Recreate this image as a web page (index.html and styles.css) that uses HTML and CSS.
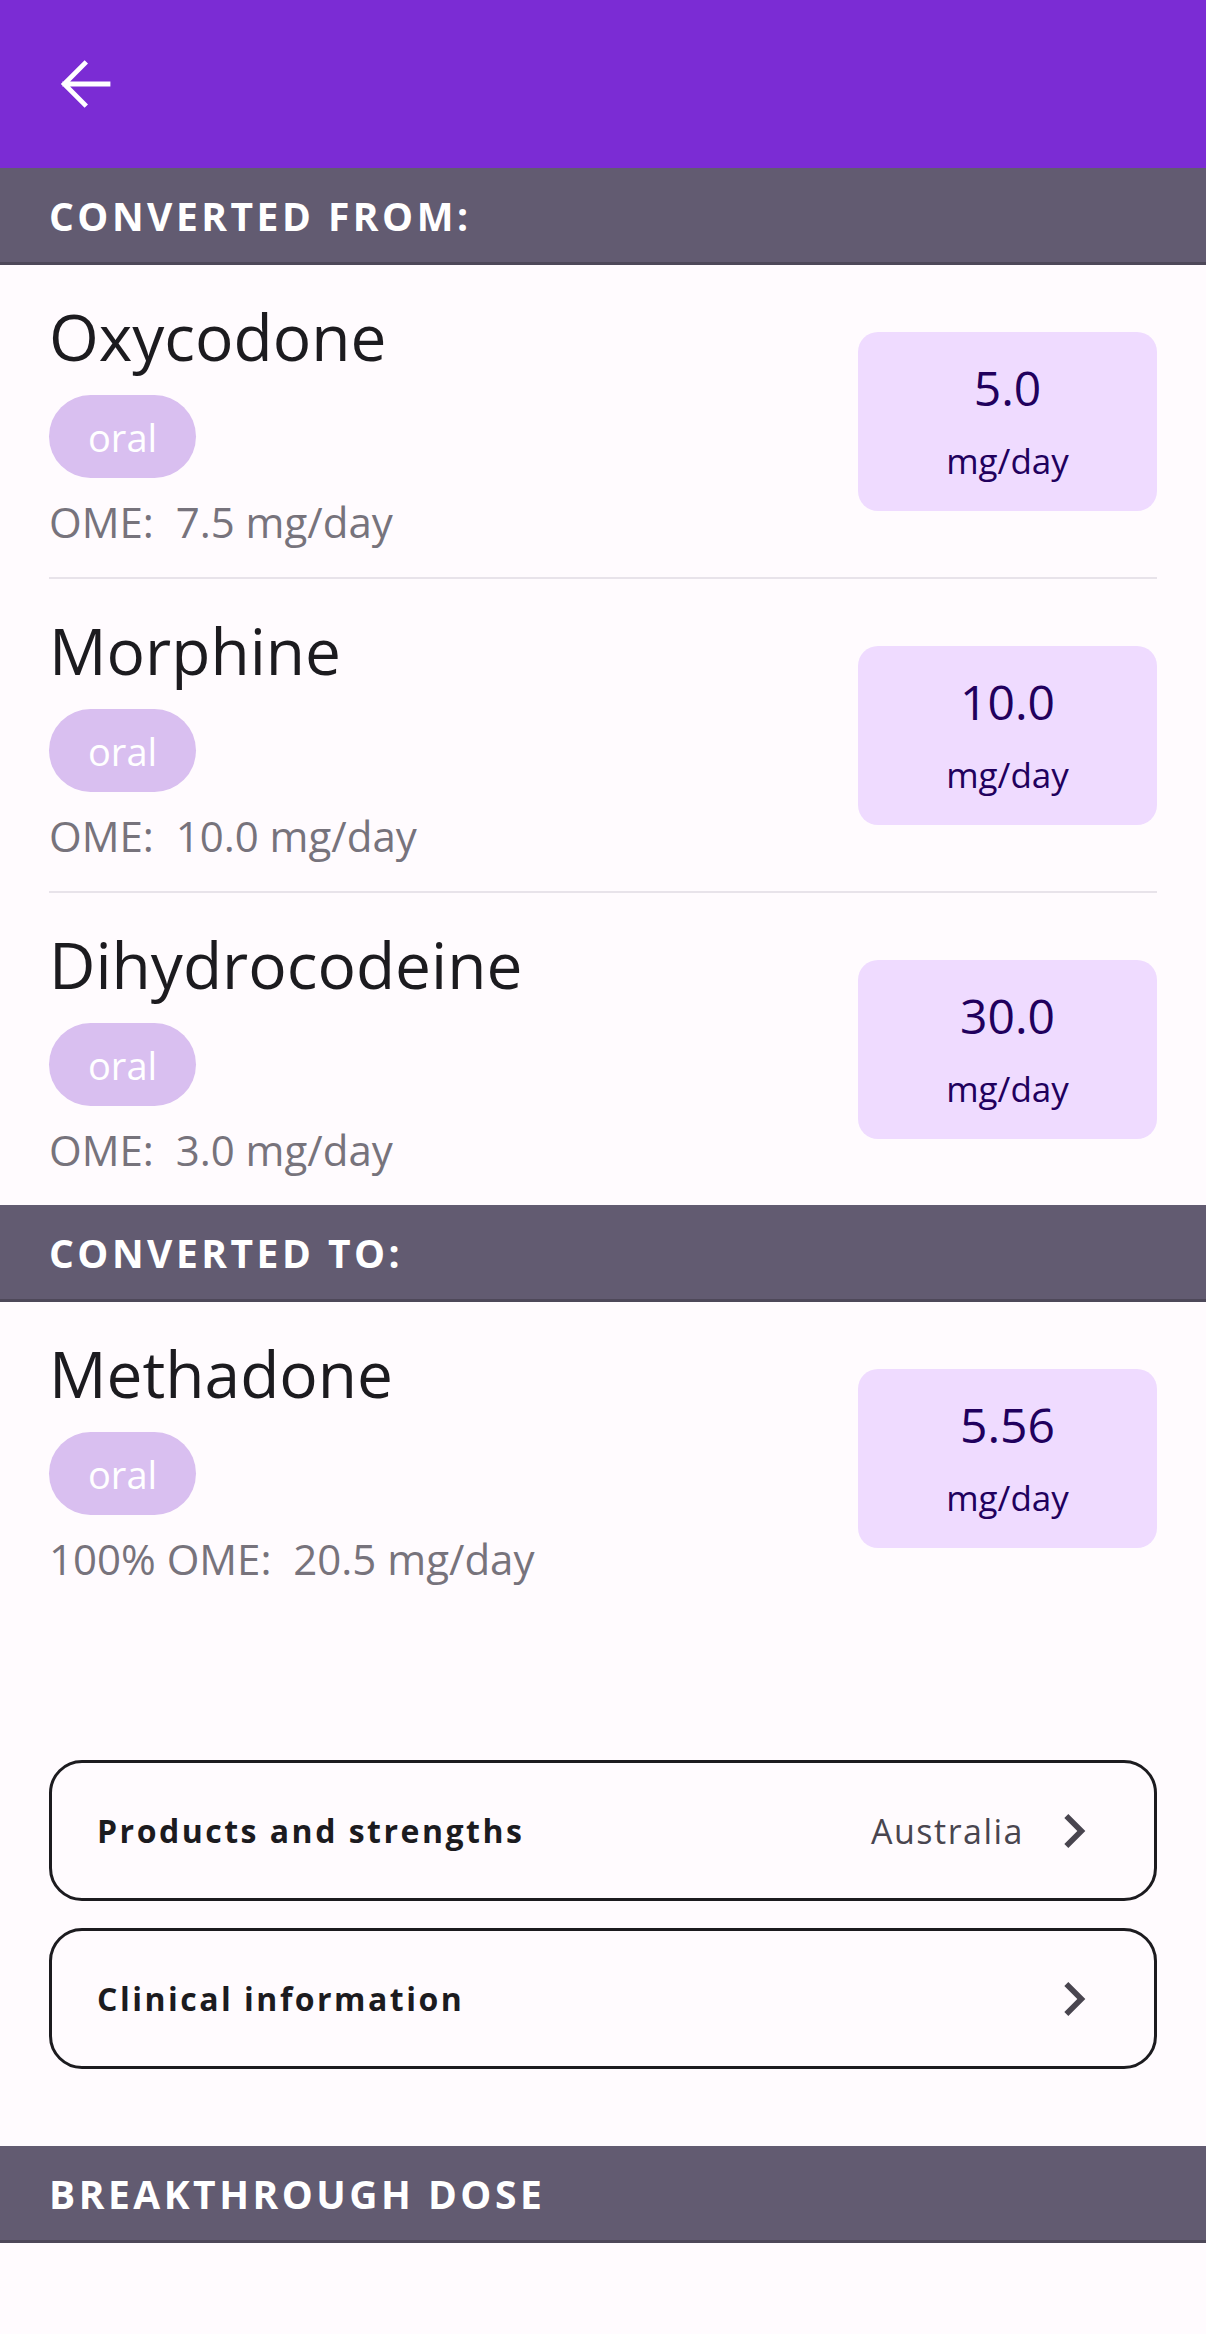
FILE: index.html
```html
<!DOCTYPE html>
<html lang="en">
<head>
<meta charset="utf-8">
<title>Conversion result</title>
<link rel="stylesheet" href="styles.css">
</head>
<body>
<header class="appbar">
  <button class="back" aria-label="Back">
    <svg viewBox="0 0 24 24" width="72" height="72"><path d="M20 12H5.6M12.2 5.2 5.4 12l6.8 6.8" fill="none" stroke="#fff" stroke-width="1.6" stroke-linecap="square"/></svg>
  </button>
</header>

<div class="band"><span>CONVERTED FROM:</span></div>
<section class="list">
  <div class="row">
    <div class="info">
      <div class="name">Oxycodone</div>
      <span class="chip">oral</span>
      <div class="ome">OME:&nbsp; 7.5 mg/day</div>
    </div>
    <div class="dose"><div class="num">5.0</div><div class="unit">mg/day</div></div>
  </div>
  <div class="row">
    <div class="info">
      <div class="name">Morphine</div>
      <span class="chip">oral</span>
      <div class="ome">OME:&nbsp; 10.0 mg/day</div>
    </div>
    <div class="dose"><div class="num">10.0</div><div class="unit">mg/day</div></div>
  </div>
  <div class="row">
    <div class="info">
      <div class="name">Dihydrocodeine</div>
      <span class="chip">oral</span>
      <div class="ome">OME:&nbsp; 3.0 mg/day</div>
    </div>
    <div class="dose"><div class="num">30.0</div><div class="unit">mg/day</div></div>
  </div>
</section>

<div class="band"><span>CONVERTED TO:</span></div>
<section class="list">
  <div class="row">
    <div class="info">
      <div class="name">Methadone</div>
      <span class="chip">oral</span>
      <div class="ome">100% OME:&nbsp; 20.5 mg/day</div>
    </div>
    <div class="dose"><div class="num">5.56</div><div class="unit">mg/day</div></div>
  </div>
</section>

<section class="links">
  <a class="card" href="#">
    <span class="card-title">Products and strengths</span>
    <span class="card-meta">Australia</span>
    <svg class="chev" viewBox="0 0 24 24" width="68" height="68"><path d="M10 6 8.59 7.41 13.17 12l-4.58 4.59L10 18l6-6z" fill="#49454F"/></svg>
  </a>
  <a class="card" href="#">
    <span class="card-title">Clinical information</span>
    <svg class="chev" viewBox="0 0 24 24" width="68" height="68"><path d="M10 6 8.59 7.41 13.17 12l-4.58 4.59L10 18l6-6z" fill="#49454F"/></svg>
  </a>
</section>

<div class="band"><span>BREAKTHROUGH DOSE</span></div>
</body>
</html>
```

FILE: styles.css
```css
* { box-sizing: border-box; }
html, body {
  margin: 0;
  padding: 0;
  background: #FFFBFE;
  font-family: "Open Sans", "Noto Sans", sans-serif;
  color: #1C1B1F;
}

.appbar {
  height: 168px;
  background: #7B2CD4;
  display: flex;
  align-items: center;
  padding-left: 48px;
}
.back {
  border: 0;
  background: transparent;
  padding: 0;
  width: 72px;
  height: 72px;
  display: block;
}
.back svg { display: block; }

.band {
  height: 97px;
  background: #625B71;
  border-bottom: 3px solid #4E4859;
  display: flex;
  align-items: center;
  padding-left: 49px;
}
.band span {
  color: #fff;
  font-weight: 700;
  font-size: 39px;
  letter-spacing: 3.5px;
}

.list { padding: 0 49px; }
.row {
  display: flex;
  align-items: center;
  justify-content: space-between;
  border-bottom: 2px solid #E8E3EA;
}
.row:last-child { border-bottom: 0; }

.info {
  display: flex;
  flex-direction: column;
  align-items: flex-start;
  padding: 32px 0 27px;
}
.name {
  font-size: 64px;
  line-height: 80px;
  color: #1C1B1F;
}
.chip {
  margin-top: 18px;
  height: 83px;
  padding: 0 39px;
  border-radius: 42px;
  background: #D9BFF0;
  color: #fff;
  font-size: 38px;
  display: inline-flex;
  align-items: center;
}
.ome {
  margin-top: 16px;
  font-size: 42px;
  line-height: 56px;
  color: #77737C;
}

.dose {
  width: 299px;
  height: 179px;
  border-radius: 20px;
  background: #EFDBFF;
  color: #21005D;
  display: flex;
  flex-direction: column;
  align-items: center;
  justify-content: center;
  gap: 19px;
}
.num { font-size: 48px; line-height: 60px; }
.unit { font-size: 35px; line-height: 48px; }

.links {
  padding: 146px 49px 77px;
  display: flex;
  flex-direction: column;
  gap: 27px;
}
.card {
  height: 141px;
  border: 3px solid #1C1B1F;
  border-radius: 33px;
  display: flex;
  align-items: center;
  padding: 0 46px 0 45px;
  text-decoration: none;
  color: #1C1B1F;
}
.card-title {
  font-size: 32px;
  font-weight: 700;
  letter-spacing: 2.5px;
  flex: 1;
}
.card-meta {
  font-size: 34px;
  letter-spacing: 1.5px;
  color: #49454F;
  margin-right: 16px;
}
.chev { display: block; flex: none; }
```
